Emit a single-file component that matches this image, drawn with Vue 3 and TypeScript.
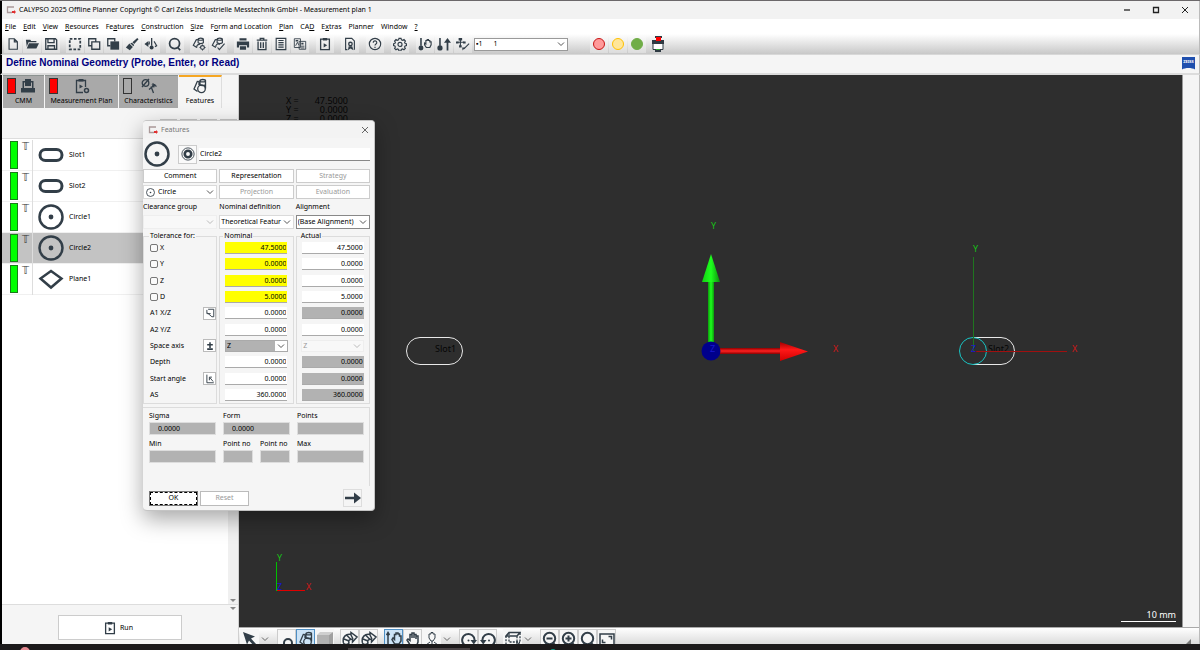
<script setup lang="ts">
import { ref } from 'vue'

interface MenuEntry { pre: string; key: string; post: string }
interface Tool { icon: string; label: string; active?: boolean; menu?: boolean; plain?: boolean; faded?: boolean }
interface Tab { icon: string; label: string; flag: string; width: string }
interface Feature { name: string; icon: string }
interface Param { label: string; check?: boolean; tool?: string; nominal: string; actual: string; highlight?: boolean; locked?: boolean; axis?: boolean }

const menus: MenuEntry[] = [
  { pre: '', key: 'F', post: 'ile' },
  { pre: '', key: 'E', post: 'dit' },
  { pre: '', key: 'V', post: 'iew' },
  { pre: '', key: 'R', post: 'esources' },
  { pre: 'Fe', key: 'a', post: 'tures' },
  { pre: '', key: 'C', post: 'onstruction' },
  { pre: '', key: 'S', post: 'ize' },
  { pre: 'F', key: 'o', post: 'rm and Location' },
  { pre: '', key: 'P', post: 'lan' },
  { pre: 'CA', key: 'D', post: '' },
  { pre: 'E', key: 'x', post: 'tras' },
  { pre: 'Planner', key: '', post: '' },
  { pre: 'Window', key: '', post: '' },
  { pre: '', key: '?', post: '' },
]

const fileTools: Tool[][] = [
  [{ icon: 'new', label: 'New' }, { icon: 'open', label: 'Open' }, { icon: 'save', label: 'Save' }],
  [
    { icon: 'marquee', label: 'Select' },
    { icon: 'copy', label: 'Copy' },
    { icon: 'paste', label: 'Paste' },
    { icon: 'brush', label: 'Format' },
    { icon: 'stylus', label: 'Probe' },
  ],
  [{ icon: 'search', label: 'Search' }],
  [{ icon: 'featgear', label: 'Feature settings' }, { icon: 'featcheck', label: 'Feature check' }],
]
const planTools: Tool[][] = [
  [
    { icon: 'print', label: 'Print' },
    { icon: 'trash', label: 'Delete' },
    { icon: 'list', label: 'List' },
    { icon: 'report', label: 'Report' },
  ],
  [{ icon: 'run', label: 'Run plan' }],
  [{ icon: 'cert', label: 'Certificate' }],
  [{ icon: 'help', label: 'Help' }],
  [{ icon: 'gear', label: 'Settings' }],
  [
    { icon: 'probehand', label: 'Manual probe' },
    { icon: 'probeup', label: 'Raise probe' },
    { icon: 'probeaxis', label: 'Probe axis' },
  ],
]
const viewTools: Tool[][] = [
  [{ icon: 'cursor', label: 'Pointer', menu: true, plain: true }],
  [
    { icon: 'ring', label: 'Points', faded: true },
    { icon: 'feat', label: 'Show features', active: true },
    { icon: 'cube', label: 'Solid', plain: true },
  ],
  [{ icon: 'bend', label: 'Path back' }, { icon: 'bend', label: 'Path forward' }],
  [
    { icon: 'axishand', label: 'Move with axis', active: true },
    { icon: 'hand', label: 'Pan' },
    { icon: 'person', label: 'View', menu: true, plain: true },
  ],
  [{ icon: 'rotr', label: 'Rotate right' }, { icon: 'rotl', label: 'Rotate left' }],
  [{ icon: 'wirecube', label: 'Standard view', menu: true, plain: true }],
  [
    { icon: 'zoomout', label: 'Zoom out' },
    { icon: 'zoomin', label: 'Zoom in' },
    { icon: 'search', label: 'Zoom area' },
    { icon: 'fit', label: 'Fit' },
  ],
]

const tabs: Tab[] = [
  { icon: 'machine', label: 'CMM', flag: 'red', width: 'w-cmm' },
  { icon: 'plan', label: 'Measurement Plan', flag: 'red', width: 'w-plan' },
  { icon: 'chars', label: 'Characteristics', flag: 'empty', width: 'w-char' },
  { icon: 'feat', label: 'Features', flag: '', width: 'w-feat' },
]
const activeTab = ref('Features')

const features: Feature[] = [
  { name: 'Slot1', icon: 'slot' },
  { name: 'Slot2', icon: 'slot' },
  { name: 'Circle1', icon: 'circle' },
  { name: 'Circle2', icon: 'circle' },
  { name: 'Plane1', icon: 'plane' },
]
const selected = ref('Circle2')

const params = ref<Param[]>([
  { label: 'X', check: true, nominal: '47.5000', actual: '47.5000', highlight: true },
  { label: 'Y', check: true, nominal: '0.0000', actual: '0.0000', highlight: true },
  { label: 'Z', check: true, nominal: '0.0000', actual: '0.0000', highlight: true },
  { label: 'D', check: true, nominal: '5.0000', actual: '5.0000', highlight: true },
  { label: 'A1 X/Z', tool: 'turn', nominal: '0.0000', actual: '0.0000', locked: true },
  { label: 'A2 Y/Z', nominal: '0.0000', actual: '0.0000' },
  { label: 'Space axis', tool: 'plusminus', nominal: 'Z', actual: 'Z', axis: true },
  { label: 'Depth', nominal: '0.0000', actual: '0.0000', locked: true },
  { label: 'Start angle', tool: 'angle', nominal: '0.0000', actual: '0.0000', locked: true },
  { label: 'AS', nominal: '360.0000', actual: '360.0000', locked: true },
])
</script>

<template>
  <svg class="defs" aria-hidden="true">
    <symbol id="new" viewBox="0 0 16 16"><path d="M3.500 2h6l3.500 3.500v8.500h-9.500z M9.500 2v3.500H13" /></symbol>
    <symbol id="open" viewBox="0 0 16 16"><path class="f" d="M1 3h5l1 1.500h6V6H4L2 11z M4.500 7H16l-3 6H2z" /></symbol>
    <symbol id="save" viewBox="0 0 16 16"><path class="w15" d="M2 2h11l1.500 1.500V14H2z M4.500 2v4.500h7V2 M4.500 14v-4h7.500v4" /></symbol>
    <symbol id="marquee" viewBox="0 0 16 16"><path class="w2" stroke-dasharray="3 1.800" d="M2 2h12v12H2z" /></symbol>
    <symbol id="copy" viewBox="0 0 16 16"><path class="w15" d="M10 5V2H2v8h3 M5.500 5.500h9v8.500h-9z" /></symbol>
    <symbol id="paste" viewBox="0 0 16 16"><path class="w15" d="M10 5V2H2v8h3" /><path class="f" d="M5 5h10v9.500H5z" /></symbol>
    <symbol id="brush" viewBox="0 0 16 16"><path class="f" d="M14 1l1.500 1.500L10.500 8 8.500 6z M8 6.500l2.500 2.500-1 1.500L6 7z M5 7.500l4 4L5.500 15 1 12z" /></symbol>
    <symbol id="stylus" viewBox="0 0 16 16"><path class="f" d="M8 1h1.500v9H8z M.500 8L5 4.500v7z" /><circle class="f" cx="8.700" cy="12" r="2.300" /><path d="M4 8h2V5 M11.500 5l3 5-2 1" /></symbol>
    <symbol id="search" viewBox="0 0 16 16"><circle class="w2" cx="7.500" cy="7.500" r="5.700" /><path class="w2" d="M11 12l3 3" /></symbol>
    <symbol id="feat" viewBox="0 0 16 16"><path d="M8 2.500v4.500 M13.500 2.500v8 M5.500 3L2 11l3.500 2.500 M5.500 3l1.500 1v3" /><ellipse cx="10.750" cy="2.700" rx="2.700" ry="1.200" /><path d="M8 6.800c1 1 4.500 1 5.500 0" /><circle cx="9.500" cy="10.800" r="3.800" /></symbol>
    <symbol id="featgear" viewBox="0 0 16 16"><path d="M5 3L1.500 9.500l4 2.500 M5 3h1.500 M7 2.500v4c1.500 1 4.500 1 6 0v-4" /><ellipse cx="10" cy="2.500" rx="3" ry="1.200" /><path d="M9 8.500c-2-.5-4 1-3.500 3.500" /><circle cx="12" cy="12" r="2.200" /><path class="thin" d="M12 8.500v1.500 M12 14v1.500 M8.500 12H10 M14 12h1.500" /></symbol>
    <symbol id="featcheck" viewBox="0 0 16 16"><path d="M5 3L1.500 9.500l4 2.500 M5 3h1.500 M7 2.500v4c1.500 1 4.500 1 6 0v-4 M7.500 12l2 2.500 6-7" /><ellipse cx="10" cy="2.500" rx="3" ry="1.200" /><path d="M10 8.500c-2-1.500-5 0-4.500 3" /></symbol>
    <symbol id="print" viewBox="0 0 16 16"><path class="f" d="M4 1.500h8V4H4z M1 5h14v7h-2.500V9.500h-9V12H1z M4.500 10.500h7v4h-7z" /></symbol>
    <symbol id="trash" viewBox="0 0 16 16"><path class="w15" d="M3.500 5v9.500h9V5 M2 3.500h12 M6 3V1.500h4V3 M6.500 6v6.500 M9.500 6v6.500" /></symbol>
    <symbol id="list" viewBox="0 0 16 16"><path d="M2.500 1.500h11v13h-11z" /><path d="M5 4h6 M5 6.500h6 M5 9h6 M5 11.500h6" /></symbol>
    <symbol id="report" viewBox="0 0 16 16"><path class="thin" d="M1.500 2h7v10h-7z M7 5h7.500v9H7z M3 10l2-4 1.500 3 M9 12.500h4 M9 10.500h4" /><path class="f" d="M9.500 6.500H12v2H9.500z M3 3.500h3V5H3z" /></symbol>
    <symbol id="run" viewBox="0 0 16 16"><path class="w15" d="M3 2.500h10v12H3z" /><path class="f" d="M5.500 1h5v3h-5z M6.500 7l4 2.500-4 2.500z" /></symbol>
    <symbol id="cert" viewBox="0 0 16 16"><path d="M5 14.500H3v-13h7l3 3v10" /><circle class="w15" cx="8.500" cy="8" r="2" /><path class="f" d="M6.500 10.500h4l1.500 4.500-3.500-2L5.500 15z" /></symbol>
    <symbol id="help" viewBox="0 0 16 16"><circle cx="8" cy="8" r="6.500" /><path d="M6 6.500c0-3 4.200-2.500 4 0C10 8 8 8 8 9.800 M8 11v1.500" /></symbol>
    <symbol id="gear" viewBox="0 0 16 16"><path d="M6.800 1.500h2.400l.4 1.700 1.500.6 1.500-.9 1.600 1.700-.9 1.500.6 1.300 1.500.3v2l-1.600.5-.6 1.300.9 1.500-1.600 1.600-1.500-.9-1.500.6-.4 1.700H6.800l-.4-1.700-1.500-.6-1.500.9-1.600-1.600.9-1.500-.6-1.300-1.500-.5v-2l1.500-.3.6-1.300-.9-1.500 1.600-1.700 1.500.9 1.500-.6z" /><circle cx="8" cy="8.500" r="2.300" /></symbol>
    <symbol id="probehand" viewBox="0 0 16 16"><path class="f" d="M2.500 1h1.800v9H2.500z" /><circle class="f" cx="3.400" cy="12.500" r="2.800" /><path d="M9.500 12L7.500 9V7l1.500 1V4h1.500V3H12v1h1.500v1.500H15V9l-1.500 3z" /></symbol>
    <symbol id="probeup" viewBox="0 0 16 16"><path class="f" d="M2.500 1h1.800v9H2.500z M11 5h2v10.500h-2z M8 6.500L12 1l4 5.500z" /><circle class="f" cx="3.400" cy="12.500" r="3" /></symbol>
    <symbol id="probeaxis" viewBox="0 0 16 16"><path d="M5 2v9 M1.500 6h8 M9 13.500l6-6" /><path class="f" d="M3 1h4v3H3z M0 5h3v2.500H0z M8 5h3v2.500H8z M3.500 9.500h3v2.500h-3z M7 12h3.500l-3 3.500z" /></symbol>
    <symbol id="machine" viewBox="0 0 16 16"><path class="f" fill-rule="evenodd" d="M5 1h6v2h2.500v7H15v4.500H1V10h1.500V3H5z M4 4.500V10h8V4.500h-1V8H5V4.500z" /></symbol>
    <symbol id="plan" viewBox="0 0 16 16"><path d="M9 14.500H2.500v-12h9V9" /><path class="f" d="M4.500 1h5v2.500h-5z M5.500 6.500L9 8.500l-3.500 2z" /><circle class="w15" cx="12.500" cy="12.500" r="2" /></symbol>
    <symbol id="chars" viewBox="0 0 16 16"><circle cx="4.500" cy="5" r="3.300" /><path d="M1 9L8 1 M12.500 15L10 8.500 M8 11.500L13.500 7 M11.500 5.500l4 3" /><path class="f" d="M10.500 6.500l4-.5-1.500 4z" /></symbol>
    <symbol id="slot" viewBox="0 0 26 26"><rect class="w3" x="2" y="7.500" width="22" height="11" rx="5.500" /></symbol>
    <symbol id="circle" viewBox="0 0 26 26"><circle class="w25" cx="13" cy="13" r="11.500" /><circle class="f" cx="13" cy="13" r="2.400" /></symbol>
    <symbol id="plane" viewBox="0 0 26 26"><path class="w25" d="M13 5l10.500 7.500L13 21.500 2.500 12.500z" /></symbol>
    <symbol id="target" viewBox="0 0 16 16"><circle class="thin" cx="8" cy="8" r="7" /><circle class="w3" cx="8" cy="8" r="3.700" /></symbol>
    <symbol id="turn" viewBox="0 0 16 16"><path class="w15" d="M5 2h9v12h-3L4 8 M3 3v6h6" /></symbol>
    <symbol id="plusminus" viewBox="0 0 16 16"><path class="w25" d="M8 2v9 M3.500 6h9 M3.500 13h9" /></symbol>
    <symbol id="angle" viewBox="0 0 16 16"><path class="w15" d="M3 1v13h11 M13 12L8 6 M7 10V5h4" /></symbol>
    <symbol id="arrow" viewBox="0 0 16 16"><path class="w25" d="M0 8h10" /><path class="f" d="M9 2.500L16 8l-7 5.500z" /></symbol>
    <symbol id="cursor" viewBox="0 0 16 16"><path class="f" d="M1 1l12 4.500-4 2 5 5.500-2 2-5-5.500-2 4z" /></symbol>
    <symbol id="ring" viewBox="0 0 16 16"><circle class="w2" cx="9" cy="12" r="4" /></symbol>
    <symbol id="cube" viewBox="0 0 16 16"><path fill="#b2b2b2" stroke="none" d="M0 4h12v12H0z" /><path fill="#cfcfcf" stroke="none" d="M0 4l3-3h13l-4 3z" /><path fill="#a0a0a0" stroke="none" d="M12 4l4-3v12l-4 3z" /></symbol>
    <symbol id="bend" viewBox="0 0 16 16"><path class="w15" d="M1.500 12C0 6 4 2.500 9 3.500V1.500l6 4.500-4.500 5V8.500C8 8 6 9 7 12c-1.500 2-4.500 2-5.500 0z M2 8l5 2 M5 4.500l4 4 M9 4l2 4" /></symbol>
    <symbol id="axishand" viewBox="0 0 16 16"><path class="w15" d="M2 1.500V15h4 M.500 4L2 1.500 3.500 4 M8 12L6 8.500 7 7l1.500 1.500V3.500H10V2h2v1h1.500v2H15v5l-2 3H9z" /></symbol>
    <symbol id="hand" viewBox="0 0 16 16"><path class="w15" d="M4.500 13L2 9l1-1 2 1.500V3.500h2V2h2v1.500h2v1.500h2V11l-1.500 4H6z M7 3.500V7 M9 3.500V7 M11 5v3" /></symbol>
    <symbol id="person" viewBox="0 0 16 16"><path class="thin" d="M5 7V3h2V1.500h2V3h2v4l-2 3H7z M8 10v5 M2 14l4-3 M14 14l-4-3 M3 15h2 M11 15h2" /></symbol>
    <symbol id="rotr" viewBox="0 0 16 16"><path class="w2" d="M3.500 14a6.200 6.200 0 1 1 10-4" /><path class="f" d="M9.500 9H16l-3.200 4.500z" /><circle class="f" cx="7.500" cy="9.500" r="1" /></symbol>
    <symbol id="rotl" viewBox="0 0 16 16"><path class="w2" d="M12.500 14a6.200 6.200 0 1 0-10-4" /><path class="f" d="M0 9h6.500l-3.300 4.500z" /><circle class="f" cx="9" cy="9.500" r="1" /></symbol>
    <symbol id="wirecube" viewBox="0 0 16 16"><path class="w15" d="M1 5l3-3.500h11L12 5H1z" /><path stroke-dasharray="2 1.200" d="M1 5v10h11V5 M15 2v9l-3 4 M4 2v9h11" /></symbol>
    <symbol id="zoomout" viewBox="0 0 16 16"><circle class="w2" cx="7.500" cy="7.500" r="5.700" /><path class="w2" d="M11 12l3 3 M4.500 7.500h6" /></symbol>
    <symbol id="zoomin" viewBox="0 0 16 16"><circle class="w2" cx="7.500" cy="7.500" r="5.700" /><path class="w2" d="M11 12l3 3 M4.500 7.500h6 M7.500 4.500v6" /></symbol>
    <symbol id="fit" viewBox="0 0 16 16"><path class="w15" d="M1 3h14v11H1z M9.500 5.500h3v3 M6.500 11.500h-3v-3" /></symbol>
    <symbol id="chevron" viewBox="0 0 8 8"><path class="thin" d="M1 2.500l3 3 3-3" /></symbol>
    <symbol id="close" viewBox="0 0 8 8"><path class="thin" d="M1 1l6 6 M7 1L1 7" /></symbol>
    <symbol id="brand" viewBox="0 0 10 8"><path fill="none" stroke="#a99" d="M3 1H1.500v5.500H6 M3 1h5" /><path fill="#e03030" stroke="none" d="M6 5h2V4l2 2-2 2V7H6z" /></symbol>
  </svg>

  <div class="app">
    <header class="titlebar">
      <svg class="ic brand"><use href="#brand" /></svg>
      <h1>CALYPSO 2025 Offline Planner Copyright © Carl Zeiss Industrielle Messtechnik GmbH - Measurement plan 1</h1>
      <div class="winctl">
        <button type="button" aria-label="Minimize"><svg class="ic" viewBox="0 0 8 8"><path d="M1 4h6" /></svg></button>
        <button type="button" aria-label="Maximize"><svg class="ic" viewBox="0 0 8 8"><path d="M1.500 1.500h5v5h-5z" /></svg></button>
        <button type="button" aria-label="Close"><svg class="ic"><use href="#close" /></svg></button>
      </div>
    </header>

    <nav class="menubar">
      <button v-for="m in menus" :key="m.pre + m.key + m.post" type="button">{{ m.pre }}<u v-if="m.key">{{ m.key }}</u>{{ m.post }}</button>
    </nav>

    <div class="toolbar">
      <div class="cluster">
        <div v-for="(group, i) in fileTools" :key="i" class="group">
          <button v-for="t in group" :key="t.label" type="button" :aria-label="t.label"><svg class="ic"><use :href="'#' + t.icon" /></svg></button>
        </div>
      </div>
      <div class="cluster wide">
        <div v-for="(group, i) in planTools" :key="i" class="group">
          <button v-for="t in group" :key="t.label" type="button" :aria-label="t.label"><svg class="ic"><use :href="'#' + t.icon" /></svg></button>
        </div>
      </div>
      <span class="pick probe">
        <select aria-label="Probe"><option>▪1 &nbsp; &nbsp; &nbsp;1</option></select>
        <svg class="ic chev"><use href="#chevron" /></svg>
      </span>
      <div class="lights group">
        <button type="button" aria-label="Stop"><span class="light stop"></span></button>
        <button type="button" aria-label="Pause"><span class="light pause"></span></button>
        <button type="button" aria-label="Start"><span class="light go"></span></button>
      </div>
      <button type="button" class="device" aria-label="Device">
        <svg viewBox="0 0 12 16">
          <path fill="#2f3a43" d="M0 4h12v4H0z M3 0h7v2H3z M3 13h6v3H3z" />
          <path fill="#f00" d="M4 1h5v4H4z" />
          <path fill="#fff" stroke="#2f3a43" d="M1 7.500h10v6H1z" />
          <path fill="#3a3" d="M4 13h4v1H4z" />
        </svg>
      </button>
    </div>

    <div class="prompt">
      <h2>Define Nominal Geometry (Probe, Enter, or Read)</h2>
      <svg class="zeiss" viewBox="0 0 13 13" role="img" aria-label="ZEISS">
        <path fill="#1f4fae" d="M0 0h13v12.500c-3-2-10-2-13 0z" />
        <text x="6.500" y="6" text-anchor="middle">ZEISS</text>
      </svg>
    </div>

    <main class="work">
      <aside class="side">
        <div class="tabs" role="tablist">
          <button v-for="t in tabs" :key="t.label" type="button" role="tab" :class="['tab', t.width, { on: activeTab === t.label }]" :aria-selected="activeTab === t.label" @click="activeTab = t.label">
            <span v-if="t.flag" :class="['flag', t.flag]"></span>
            <svg class="ic"><use :href="'#' + t.icon" /></svg>
            <span class="tab-label">{{ t.label }}</span>
          </button>
        </div>
        <div class="side-tools">
          <button v-for="n in 4" :key="n" type="button" :aria-label="'View ' + n"></button>
        </div>
        <div class="list-area">
          <ul class="list">
            <li v-for="f in features" :key="f.name" :class="{ sel: selected === f.name }" @click="selected = f.name">
              <span class="status"><i></i><b>𝕋</b></span>
              <svg class="ic"><use :href="'#' + f.icon" /></svg>
              <span>{{ f.name }}</span>
            </li>
          </ul>
          <div class="scroll"><i></i></div>
        </div>
        <div class="runbar">
          <button type="button"><svg class="ic"><use href="#run" /></svg>Run</button>
          <i></i>
        </div>
      </aside>

      <section class="view">
        <div class="stage">
          <svg class="scene" viewBox="0 0 943 552">
            <defs>
              <linearGradient id="gy"><stop offset="0" stop-color="#0b9c0b" /><stop offset=".5" stop-color="#1eff1e" /><stop offset="1" stop-color="#0b9c0b" /></linearGradient>
              <linearGradient id="ghead"><stop offset="0" stop-color="#12d012" /><stop offset=".5" stop-color="#1eff1e" /><stop offset="1" stop-color="#0b8c0b" /></linearGradient>
              <linearGradient id="rx" x2="0" y2="1"><stop offset="0" stop-color="#8c0000" /><stop offset=".5" stop-color="#ff2020" /><stop offset="1" stop-color="#8c0000" /></linearGradient>
              <linearGradient id="rhead" x2="0" y2="1"><stop offset="0" stop-color="#a00000" /><stop offset=".4" stop-color="#ff1818" /><stop offset="1" stop-color="#d00000" /></linearGradient>
            </defs>
            <g fill="#050505">
              <text x="47" y="29">X =</text><text x="109" y="29" text-anchor="end">47.5000</text>
              <text x="47" y="38">Y =</text><text x="109" y="38" text-anchor="end">0.0000</text>
              <text x="47" y="47">Z =</text><text x="109" y="47" text-anchor="end">0.0000</text>
              <text x="196" y="277">Slot1</text><text x="749" y="277">Slot2</text>
            </g>
            <path fill="url(#gy)" d="M469 207h6v63h-6z" />
            <path fill="url(#ghead)" d="M472 179l9 28h-18z" />
            <path fill="url(#rx)" d="M480 273h61v6h-61z" />
            <path fill="url(#rhead)" d="M541 267l28 9.500-28 9.500z" />
            <circle cx="472" cy="276" r="9.500" fill="#00008b" />
            <rect x="167.500" y="262.500" width="56" height="27" rx="13.500" fill="none" stroke="#e8e8e8" />
            <path fill="none" stroke="#e8e8e8" d="M734 262.500h28a13.500 13.500 0 0 1 0 27h-28" />
            <circle cx="734" cy="276" r="13.500" fill="none" stroke="#19c4c4" />
            <path stroke="#1f751f" d="M734.500 182v94" />
            <path stroke="#a01010" d="M735 276.500h93" />
            <path stroke="#00c000" d="M37.500 487v29" />
            <path stroke="#e00000" d="M38 515.500h28" />
            <path stroke="#fff" d="M882 546.500h55" />
            <g fill="#18c018"><text x="472" y="154">Y</text><text x="734" y="177">Y</text><text x="38" y="486">Y</text></g>
            <g fill="#d01818"><text x="594" y="277">X</text><text x="833" y="277">X</text><text x="67" y="515">X</text></g>
            <g fill="#1818d0"><text x="471" y="277">Z</text><text x="732" y="277">Z</text><text x="38" y="515">Z</text></g>
            <text x="937" y="543" text-anchor="end" fill="#fff">10 mm</text>
          </svg>
        </div>
        <div class="viewbar">
          <div v-for="(group, i) in viewTools" :key="i" class="vgroup">
            <template v-for="t in group" :key="t.label">
              <button type="button" :aria-label="t.label" :class="{ active: t.active, plain: t.plain }"><svg class="ic"><use :href="'#' + t.icon" /></svg></button>
              <svg v-if="t.menu" class="ic chev"><use href="#chevron" /></svg>
            </template>
          </div>
          <svg class="grip" viewBox="0 0 5 5"><path d="M5 0v5H0z" /></svg>
        </div>
      </section>

      <form class="dialog" @submit.prevent>
        <div class="dlg-title">
          <svg class="ic brand"><use href="#brand" /></svg>
          <span>Features</span>
          <button type="button" aria-label="Close dialog"><svg class="ic"><use href="#close" /></svg></button>
        </div>

        <div class="ident">
          <svg class="ic big"><use href="#circle" /></svg>
          <button type="button" aria-label="Preview"><svg class="ic"><use href="#target" /></svg></button>
          <input type="text" value="Circle2" aria-label="Feature name">
        </div>

        <div class="cols actions">
          <button type="button">Comment</button>
          <button type="button">Representation</button>
          <button type="button" disabled>Strategy</button>
          <span class="pick type">
            <svg class="ic lead"><use href="#circle" /></svg>
            <select aria-label="Feature type"><option>Circle</option></select>
            <svg class="ic chev"><use href="#chevron" /></svg>
          </span>
          <button type="button" disabled>Projection</button>
          <button type="button" disabled>Evaluation</button>
        </div>

        <div class="cols refs">
          <label for="clearance">Clearance group</label>
          <label for="definition">Nominal definition</label>
          <label for="alignment">Alignment</label>
          <span class="pick off"><select id="clearance" disabled><option></option></select><svg class="ic chev"><use href="#chevron" /></svg></span>
          <span class="pick"><select id="definition"><option>Theoretical Featur</option></select><svg class="ic chev"><use href="#chevron" /></svg></span>
          <span class="pick strong"><select id="alignment"><option>(Base Alignment)</option></select><svg class="ic chev"><use href="#chevron" /></svg></span>
        </div>

        <div class="cols values">
          <fieldset>
            <legend class="inset">Tolerance for:</legend>
            <div class="rows">
              <div v-for="p in params" :key="p.label" class="row">
                <label v-if="p.check"><input type="checkbox">{{ p.label }}</label>
                <span v-else>{{ p.label }}</span>
                <button v-if="p.tool" type="button" :aria-label="p.label"><svg class="ic"><use :href="'#' + p.tool" /></svg></button>
              </div>
            </div>
          </fieldset>
          <fieldset>
            <legend>Nominal</legend>
            <div class="rows fields">
              <div v-for="p in params" :key="p.label" class="row">
                <span v-if="p.axis" class="pick axis"><select :aria-label="'Nominal ' + p.label"><option>{{ p.nominal }}</option></select><svg class="ic chev"><use href="#chevron" /></svg></span>
                <input v-else v-model="p.nominal" type="text" :class="{ hl: p.highlight }" :aria-label="'Nominal ' + p.label">
              </div>
            </div>
          </fieldset>
          <fieldset>
            <legend>Actual</legend>
            <div class="rows fields">
              <div v-for="p in params" :key="p.label" class="row">
                <span v-if="p.axis" class="pick off"><select disabled :aria-label="'Actual ' + p.label"><option>{{ p.actual }}</option></select><svg class="ic chev"><use href="#chevron" /></svg></span>
                <input v-else v-model="p.actual" type="text" readonly :class="{ locked: p.locked }" :aria-label="'Actual ' + p.label">
              </div>
            </div>
          </fieldset>
        </div>

        <div class="results">
          <label class="span2">Sigma<input type="text" value="0.0000" readonly></label>
          <label class="span2">Form<input type="text" value="0.0000" readonly></label>
          <label class="span2">Points<input type="text" readonly></label>
          <label class="span2">Min<input type="text" readonly></label>
          <label>Point no<input type="text" readonly></label>
          <label>Point no<input type="text" readonly></label>
          <label class="span2">Max<input type="text" readonly></label>
        </div>

        <div class="confirm">
          <button type="submit" class="ok">OK</button>
          <button type="button" disabled>Reset</button>
          <button type="button" class="next" aria-label="Next"><svg class="ic"><use href="#arrow" /></svg></button>
        </div>
      </form>
    </main>

    <footer class="taskbar">
      <svg viewBox="0 0 1200 6" preserveAspectRatio="xMinYMax slice">
        <path fill="#4a4446" d="M348 4h122v2H348z" />
        <circle cx="25" cy="8" r="5" fill="#e58a92" />
        <circle cx="553" cy="8" r="3" fill="#159a86" />
      </svg>
    </footer>
  </div>
</template>

<style>
html, body { margin: 0; background: #f5f5f5; }
</style>

<style scoped>
* { box-sizing: border-box; }
.defs { display: none; }
button, input, select { font: inherit; color: inherit; margin: 0; padding: 0; border: 0; background: none; border-radius: 0; min-width: 0; }
h1, h2, ul { margin: 0; padding: 0; font-weight: 400; list-style: none; }

.app {
  display: flex; flex-direction: column; min-height: 100vh;
  font: 7px/10px "Noto Sans", "Open Sans", sans-serif; color: #000;
  background: #f5f5f5; border-top: 1px solid #6b686a;
}
.ic { display: block; width: 14px; height: 14px; flex: none; fill: none; stroke: #323e48; stroke-width: 1.3; color: #323e48; }
.f { fill: #323e48; stroke: none; }
.thin { stroke-width: 1; }
.w15 { stroke-width: 1.5; }
.w2 { stroke-width: 2; }
.w25 { stroke-width: 2.5; }
.w3 { stroke-width: 3; }
.brand { width: 10px; height: 8px; }
.chev { width: 8px; height: 8px; }

.titlebar, .menubar, .toolbar, .prompt, .work { border-left: 2px solid #000; border-right: 1px solid #bbb; }
.titlebar { display: flex; align-items: center; height: 18px; padding-left: 4px; gap: 3px; background: #f2f2f2; }
.titlebar h1 { font-size: 7px; flex: 1; white-space: nowrap; }
.winctl { display: flex; gap: 15px; padding-right: 7px; }
.winctl button { width: 14px; height: 14px; display: grid; place-items: center; }
.winctl .ic { width: 8px; height: 8px; stroke: #222; }

.menubar { display: flex; gap: 7px; height: 15px; padding: 2px 3px; background: #fff; white-space: nowrap; }
.menubar u { text-underline-offset: 1px; }

.toolbar { display: flex; align-items: center; height: 21px; padding-left: 2px; background: linear-gradient(#fff, #c8c8c8); border-bottom: 1px solid #d8d8d8; }
.cluster { display: flex; gap: 6px; }
.cluster.wide { gap: 7px; margin-left: 7px; }
.group { display: flex; gap: 1px; }
.group button { width: 18px; height: 18px; display: grid; place-items: center; background: linear-gradient(#fcfcfc, #dcdcdc); }
.pick { position: relative; display: flex; align-items: center; background: #fff; border: 1px solid #dadada; }
.pick select { appearance: none; width: 100%; height: 100%; padding: 0 10px 0 1px; opacity: 1; text-overflow: clip; white-space: nowrap; overflow: hidden; }
.pick .chev { position: absolute; right: 2px; pointer-events: none; stroke: #555; }
.probe { width: 94px; height: 13px; margin-left: 2px; border-color: #999; }
.lights { margin-left: 22px; }
.light { width: 12px; height: 12px; border-radius: 50%; border: 1px solid; }
.stop { background: #ff9a9a; border-color: #c81414; }
.pause { background: #ffe699; border-color: #ffc000; }
.go { background: #70ad47; border-color: #70ad47; }
.device { width: 18px; height: 18px; margin-left: 3px; display: grid; place-items: center; }
.device svg { width: 12px; height: 16px; }

.prompt { display: flex; align-items: center; justify-content: space-between; height: 20px; padding: 0 4px 2px; border-bottom: 2px solid #dcdcdc; }
.prompt h2 { font: bold 10px/14px "Liberation Sans", Arial, sans-serif; color: #00007e; }
.zeiss { width: 13px; height: 13px; }
.zeiss text { font-size: 4px; font-weight: bold; fill: #fff; }

.work { position: relative; flex: 1; display: flex; align-items: stretch; }
.side { width: 237px; display: flex; flex-direction: column; border-right: 1px solid #d0d0d0; }
.tabs { display: flex; gap: 1px; padding-left: 1px; height: 33px; align-items: stretch; }
.tab { display: flex; flex-wrap: wrap; justify-content: flex-start; align-content: flex-start; column-gap: 4px; padding: 2px 0 0; background: #a9a9a9; border-top: 1px solid #8b9290; }
.tab .ic { width: 16px; height: 16px; }
.tab-label { width: 100%; text-align: center; line-height: 14px; white-space: nowrap; }
.tab .flag { width: 9px; height: 16px; margin-left: 4px; border: 1px solid #333; }
.flag.red { background: #f00; }
.w-cmm { width: 41px; }
.w-plan { width: 73px; }
.w-plan .ic { margin-left: 12px; }
.w-char { width: 59px; }
.w-char .ic { margin-left: 5px; }
.w-feat { width: 43px; }
.w-feat .ic { margin: 0 auto; }
.tab.on { background: #f5f5f5; border-top: 2px solid #f5a623; border-right: 1px solid #ddd; padding-top: 1px; }
.side-tools { display: flex; justify-content: flex-end; gap: 3px; height: 30px; padding: 11px 1px 0 0; overflow: hidden; }
.side-tools button { width: 17px; height: 18px; border: 1px solid #c4c4c4; background: #fafafa; }
.list-area { flex: 1; display: flex; background: #fff; border-top: 1px solid #ddd; border-bottom: 1px solid #ddd; }
.list { flex: 1; padding-top: 1px; }
.list li { display: flex; align-items: center; height: 31px; gap: 5px; border-bottom: 1px solid #f0f0f0; }
.list li .ic { width: 26px; height: 26px; }
.list li.sel { background: #c3c3c3; }
.status { display: flex; gap: 4px; width: 31px; height: 31px; padding: 1px 0 0 8px; border-right: 1px solid #ddd; }
.status i { width: 8px; height: 28px; background: #0f0; border: 1px solid #1a7a1a; }
.status b { font: 10px/12px "DejaVu Sans", sans-serif; color: #333; }
.scroll { width: 10px; background: #f0f0f0; display: flex; align-items: flex-end; justify-content: center; padding-bottom: 2px; }
.scroll i, .runbar i { border: 3px solid transparent; border-top-color: #888; border-bottom: 0; }
.runbar { display: flex; justify-content: center; height: 39px; padding-top: 10px; }
.runbar button { display: flex; align-items: center; justify-content: center; gap: 3px; width: 124px; height: 25px; margin-left: 56px; padding-right: 4px; background: #fff; border: 1px solid #ccc; }
.runbar i { height: 3px; margin: -8px 2px 0 auto; }

.view { flex: 1; display: flex; flex-direction: column; min-width: 0; }
.stage { flex: 1; display: flex; min-height: 0; margin-right: 16px; background: #2e2e2e; border-right: 1px solid #999; position: relative; }
.scene { position: absolute; inset: 0; width: 100%; height: 100%; }
.scene text { font: 9px "Noto Sans", sans-serif; }
.viewbar { display: flex; gap: 6px; height: 17px; overflow: hidden; padding: 1px 0 0 1px; border-top: 1px solid #aaa; background: linear-gradient(#fff, #dcdcdc); }
.vgroup { display: flex; height: 20px; flex: none; }
.vgroup button { width: 19px; height: 20px; display: grid; place-items: center; background: #f6f6f6; border: 1px solid #ccc; }
.vgroup button.plain { border-color: transparent; }
.vgroup button.active { background: #cde4f7; border-color: #4f8fc4; }
.vgroup .ic { width: 16px; height: 16px; }
.vgroup .chev { width: 8px; height: 8px; margin: 6px 2px 0; stroke: #666; }
.grip { width: 5px; height: 5px; margin: 10px 8px 0 auto; fill: #777; }

.dialog {
  position: absolute; left: 141px; top: 45px; width: 232px; padding: 0 4px 3px 0;
  background: #f5f5f5; border-radius: 4px; border: 1px solid #c4c4c4; border-left: 0;
  box-shadow: 0 8px 22px rgba(0, 0, 0, .35); overflow: hidden;
}
.dlg-title { display: flex; align-items: center; gap: 3px; height: 17px; padding-left: 5px; margin-right: -4px; background: #f3f3f3; color: #777; }
.dlg-title button { margin-left: auto; padding: 5px; }
.dlg-title button .ic { width: 8px; height: 8px; stroke: #666; }
.ident { display: flex; align-items: center; height: 30px; margin-top: 1px; padding-left: 1px; }
.ident .big { width: 26px; height: 26px; }
.ident button { width: 19px; height: 19px; margin: 0 2px 0 8px; display: grid; place-items: center; border: 1px solid #ccc; background: #fafafa; }
.ident input { flex: 1; height: 13px; padding-left: 1px; background: #fff; border-bottom: 1px solid #888; }
.cols { display: grid; grid-template-columns: repeat(3, 1fr); column-gap: 2px; }
.actions { row-gap: 2px; grid-auto-rows: 14px; }
.actions button { background: #fff; border: 1px solid #ccc; }
.actions button:disabled, .confirm button:disabled { color: #999; }
.type .lead { width: 9px; height: 9px; margin-left: 2px; stroke-width: 2; }
.type select { padding-left: 3px; }
.refs { margin-top: 1px; grid-template-rows: 13px 14px; row-gap: 2px; align-items: center; }
.refs label { white-space: nowrap; }
.refs .pick { height: 14px; }
.pick.off { background: #f8f8f8; border-color: #eee; color: #999; }
.pick.off .chev { stroke: #bbb; }
.pick.strong { border-color: #888; }
.values { margin-top: 2px; }
fieldset { margin: 0; padding: 0 3px; border: 1px solid #dcdcdc; min-width: 0; }
legend { padding: 0 1px; height: 10px; }
legend.inset { margin-left: 2px; }
.rows { display: grid; grid-template-rows: repeat(10, 1fr); height: 163px; margin-top: -1px; }
.row { display: flex; align-items: center; justify-content: space-between; white-space: nowrap; padding-left: 3px; min-height: 0; }
.row label { display: flex; align-items: center; gap: 2px; }
.row input[type="checkbox"] { appearance: none; width: 8px; height: 8px; border: 1px solid #777; border-radius: 2px; background: #fafafa; }
.row button { width: 13px; height: 13px; margin-right: -3px; display: grid; place-items: center; border: 1px solid #bbb; background: #fff; }
.row button .ic { width: 10px; height: 10px; }
.fields .row { padding-left: 0; justify-content: center; }
.fields .row input { width: 62px; height: 12px; text-align: right; background: #fff; border-bottom: 1px solid #aaa; padding-right: 1px; }
.fields .row input.hl { background: #ff0; }
.fields .row input.locked { background: #b2b2b2; }
.fields .pick { width: 63px; height: 12px; }
.pick.axis { background: #b2b2b2; border-color: #aaa; }
.pick.axis .chev { right: 0; width: 12px; height: 10px; padding: 1px 2px; background: #fff; }
.results { display: grid; grid-template-columns: repeat(6, 30px); column-gap: 7px; row-gap: 4px; height: 79px; margin-top: 3px; padding: 3px 5px 0 6px; border: 1px solid #dcdcdc; border-width: 1px 1px 0 0; align-content: start; }
.results label { display: flex; flex-direction: column; gap: 1px; white-space: nowrap; }
.results .span2 { grid-column: span 2; }
.results input { width: 100%; height: 13px; padding-left: 8px; background: #b2b2b2; border: 1px solid #ddd; }
.confirm { display: flex; align-items: center; gap: 2px; padding: 3px 8px 0 6px; }
.confirm button { width: 49px; height: 15px; background: #fff; border: 1px solid #bbb; }
.confirm .ok { border: 1px solid #777; outline: 1px dashed #000; outline-offset: -2px; }
.confirm .next { width: 19px; height: 18px; margin-left: auto; display: grid; place-items: center; background: #f5f5f5; border-color: #ddd; }
.confirm .next .ic { width: 16px; height: 16px; }

.taskbar { height: 6px; background: #1c1a1b; overflow: hidden; }
.taskbar svg { display: block; width: 100%; height: 6px; }
</style>
